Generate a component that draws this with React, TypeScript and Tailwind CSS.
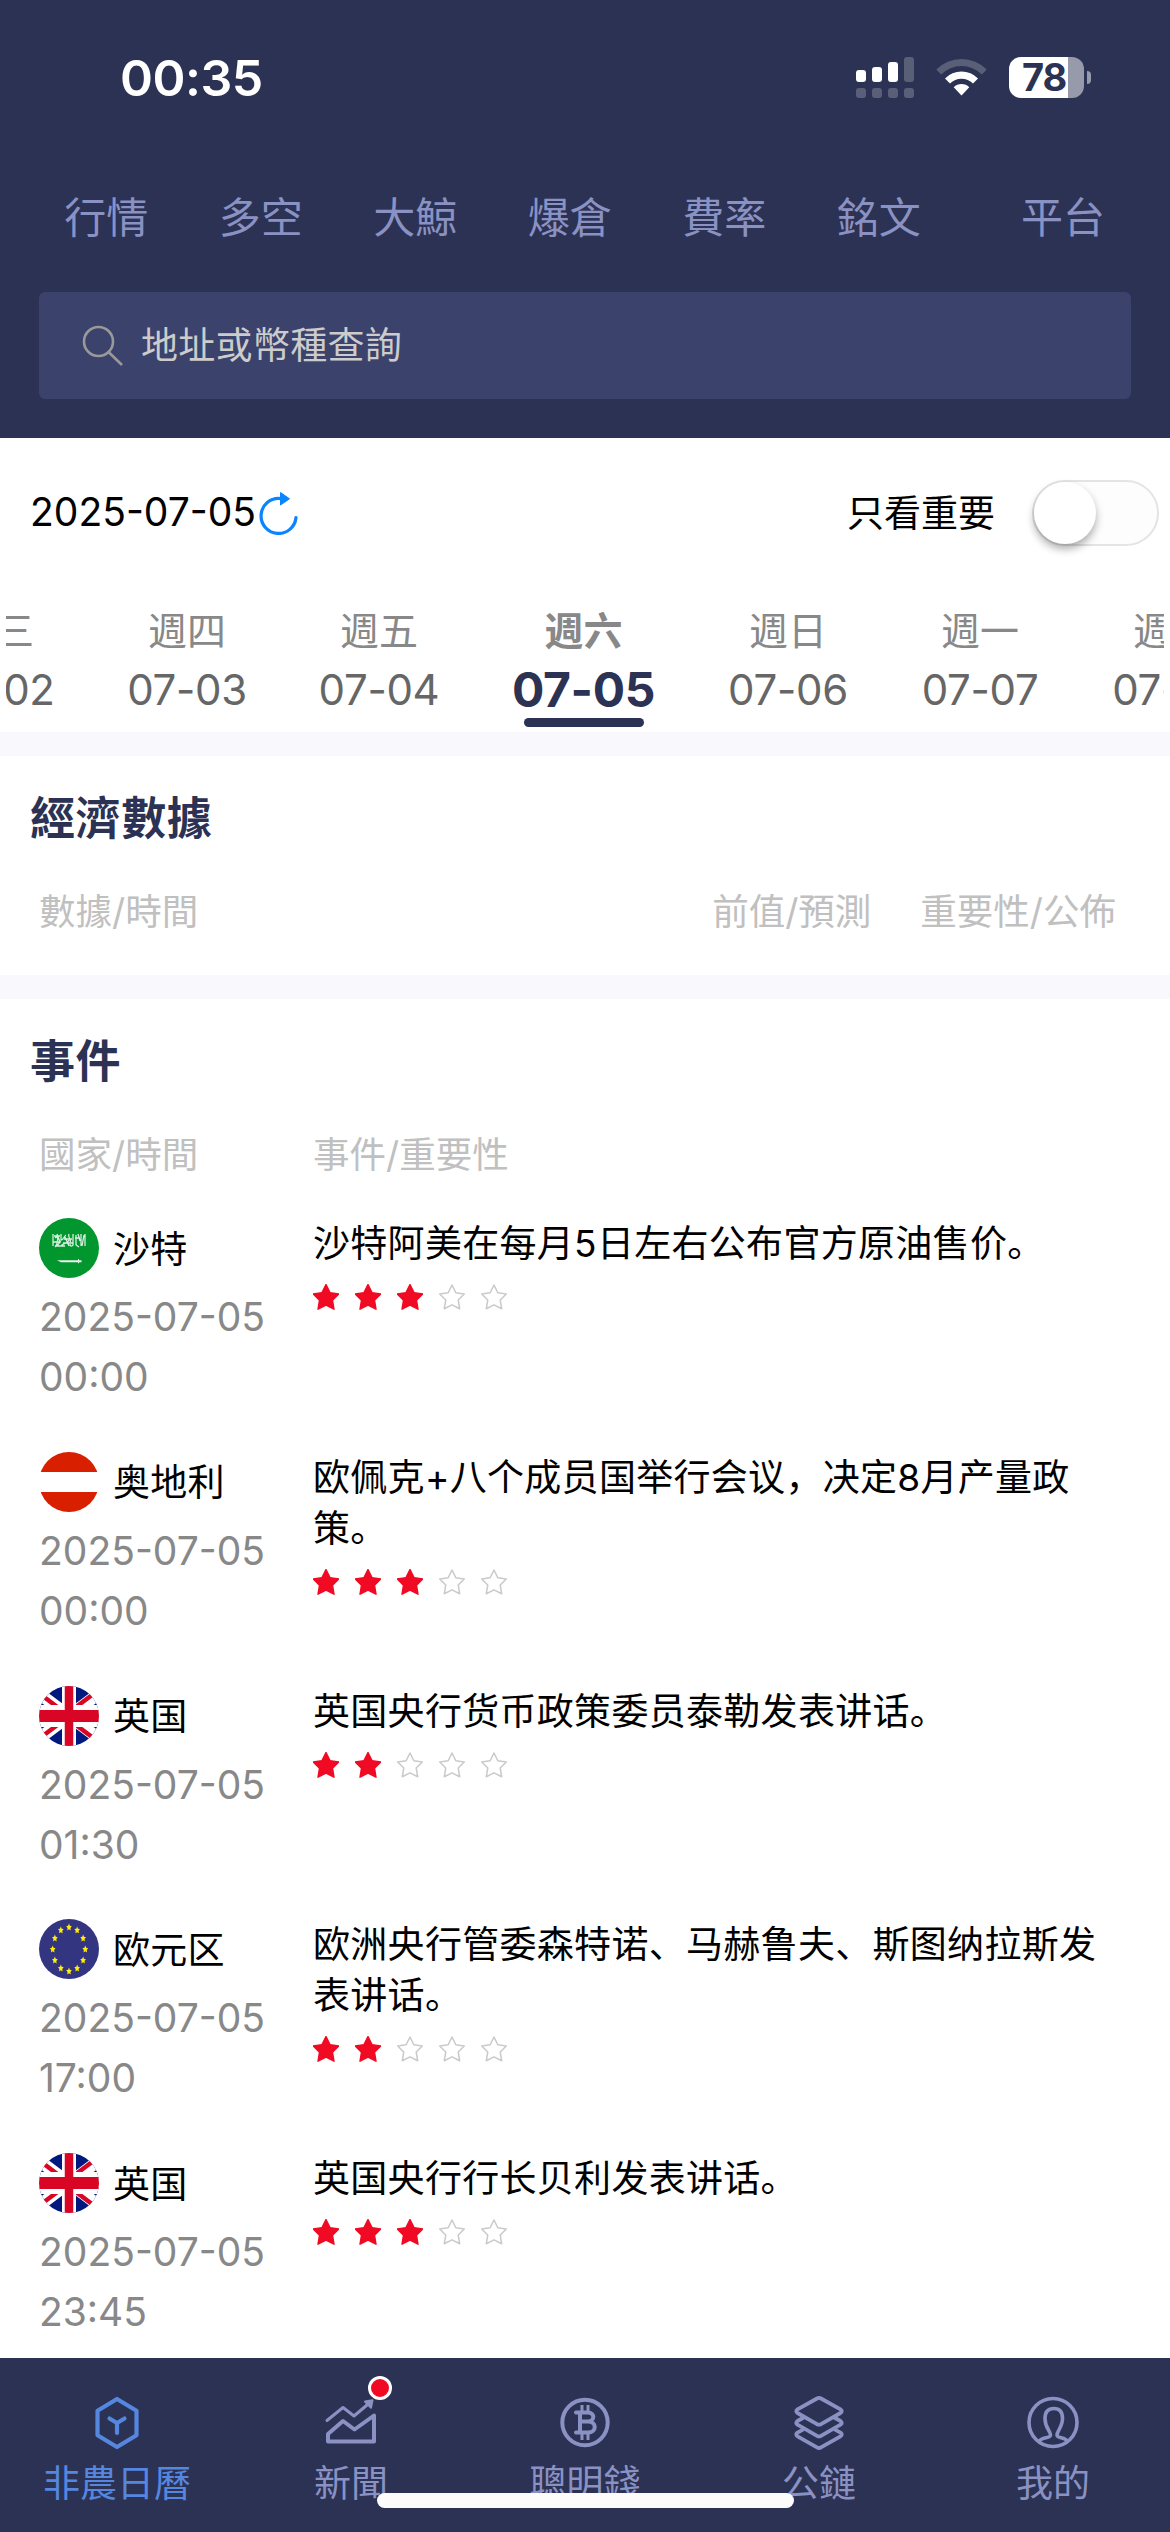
import React, { useState } from 'react';
import clsx from 'clsx';

interface EconomicEvent {
  country: string;
  flag: 'sa' | 'at' | 'gb' | 'eu';
  date: string;
  time: string;
  title: string;
  stars: number;
}

const channels = ['行情', '多空', '大鯨', '爆倉', '費率', '銘文'];

const days = [
  { week: '週三', date: '07-02' },
  { week: '週四', date: '07-03' },
  { week: '週五', date: '07-04' },
  { week: '週六', date: '07-05' },
  { week: '週日', date: '07-06' },
  { week: '週一', date: '07-07' },
  { week: '週二', date: '07-08' },
];

const events: EconomicEvent[] = [
  { country: '沙特', flag: 'sa', date: '2025-07-05', time: '00:00', title: '沙特阿美在每月5日左右公布官方原油售价。', stars: 3 },
  { country: '奥地利', flag: 'at', date: '2025-07-05', time: '00:00', title: '欧佩克+八个成员国举行会议，决定8月产量政策。', stars: 3 },
  { country: '英国', flag: 'gb', date: '2025-07-05', time: '01:30', title: '英国央行货币政策委员泰勒发表讲话。', stars: 2 },
  { country: '欧元区', flag: 'eu', date: '2025-07-05', time: '17:00', title: '欧洲央行管委森特诺、马赫鲁夫、斯图纳拉斯发表讲话。', stars: 2 },
  { country: '英国', flag: 'gb', date: '2025-07-05', time: '23:45', title: '英国央行行长贝利发表讲话。', stars: 3 },
];

const starPoints = '13,0.5 17,8.6 25.8,9.9 19.5,16.2 21,25.2 13,21.2 5,25.2 6.5,16.2 0.2,9.9 9,8.6';

const StatusBar = () => (
  <div className="flex h-[155px] items-center justify-between pl-[120px] pr-[79px]">
    <span className="text-[50px] font-semibold leading-none tracking-[-0.5px] text-white">00:35</span>
    <div className="flex items-center">
      <svg width="58" height="41" viewBox="0 0 58 41" fill="#fff">
        <rect x="0" y="13" width="10" height="12" rx="3" />
        <rect x="16" y="10" width="10" height="15" rx="3" />
        <rect x="32" y="5" width="10" height="20" rx="3" />
        <rect x="48" y="0" width="10" height="25" rx="3" opacity="0.22" />
        <g opacity="0.22">
          <rect x="0" y="31" width="10" height="10" rx="3" />
          <rect x="16" y="31" width="10" height="10" rx="3" />
          <rect x="32" y="31" width="10" height="10" rx="3" />
          <rect x="48" y="31" width="10" height="10" rx="3" />
        </g>
      </svg>
      <svg className="ml-[22px]" width="51" height="37" viewBox="0 0 51 37" fill="#fff">
        <path d="M0.3 10.5 A35.6 35.6 0 0 1 50.7 10.5 L45.8 15.5 A28.6 28.6 0 0 0 5.2 15.5 Z" opacity="0.22" />
        <path d="M9 19.4 A23.3 23.3 0 0 1 42 19.4 L37 24.4 A16.3 16.3 0 0 0 14 24.4 Z" />
        <path d="M17.7 28.3 A11 11 0 0 1 33.3 28.3 L25.5 36.6 Z" />
      </svg>
      <div className="ml-[22px] flex h-[41px] w-[75px] items-center rounded-[12px] bg-[linear-gradient(to_right,#fff_59px,#979aab_59px)] pl-[13px]">
        <span className="text-[38px] font-bold leading-[41px] tracking-[-1px] text-[#2c3253]">78</span>
      </div>
      <div className="ml-[3px] h-[13px] w-[4px] rounded-r-full bg-[#979aab]" />
    </div>
  </div>
);

const Star: React.FC<{ filled: boolean }> = ({ filled }) => (
  <svg width="26" height="26" viewBox="0 0 26 26">
    {filled ? (
      <polygon points={starPoints} fill="#f00a23" stroke="#f00a23" strokeWidth="1.4" strokeLinejoin="round" />
    ) : (
      <polygon points={starPoints} fill="none" stroke="#cacacd" strokeWidth="1.6" strokeLinejoin="round" transform="translate(0.5 0.5) scale(0.96)" />
    )}
  </svg>
);

const Flag: React.FC<{ code: EconomicEvent['flag'] }> = ({ code }) => (
  <svg className="shrink-0 rounded-full" width="60" height="60" viewBox="0 0 60 60">
    {code === 'sa' && (
      <>
        <rect width="60" height="60" fill="#02962e" />
        <g fill="none" stroke="#fff" strokeWidth="1.3" opacity="0.85">
          <path d="M14 16v12M16 20c4-4 3 6 0 9M18 16l3 8-3 4M22 16v6c3 0 3-4 5-5M22 28c3-4 6-1 8-6M26 19l4 9M30 16c-2 4 3 5 1 8M34 16v11c-2 2-3 1-3-1M37 17v10l3 2M39 16l2 7M42 16v12M45 17l-2 11M46 16v12M14 24h8M24 25h10M15 18h6M25 21h8M36 20h5M16 28h10" />
        </g>
        <path d="M18 42.2h21v-1.2h1v1.2h2.5v2h-2.5v1h-1v-1H22z" fill="#fff" opacity="0.9" />
      </>
    )}
    {code === 'at' && (
      <>
        <rect width="60" height="60" fill="#fff" />
        <rect width="60" height="20" fill="#d82000" />
        <rect y="40" width="60" height="20" fill="#d82000" />
      </>
    )}
    {code === 'gb' && (
      <>
        <rect width="60" height="60" fill="#00197f" />
        <path d="M-10 0L70 60M70 0L-10 60" stroke="#fff" strokeWidth="12" />
        <path d="M32 26.5L72 -3.5M28 33.5L-12 63.5" stroke="#d80624" strokeWidth="4.5" transform="translate(-1 -1)" />
        <path d="M28 26.5L-12 -3.5M32 33.5L72 63.5" stroke="#d80624" strokeWidth="4.5" transform="translate(-1 1)" />
        <path d="M30 0V60M0 30H60" stroke="#fff" strokeWidth="14" />
        <path d="M0 30H60" stroke="#fff" strokeWidth="22" />
        <path d="M30 0V60" stroke="#d80624" strokeWidth="8.5" />
        <path d="M0 30H60" stroke="#d80624" strokeWidth="12" />
      </>
    )}
    {code === 'eu' && (
      <>
        <rect width="60" height="60" fill="#333581" />
        {[0, 30, 60, 90, 120, 150, 180, 210, 240, 270, 300, 330].map((deg) => (
          <polygon
            key={deg}
            points={starPoints}
            fill="#ffee0a"
            transform={`translate(${30 + 16.3 * Math.sin((deg * Math.PI) / 180)} ${30 - 22 * Math.cos((deg * Math.PI) / 180)}) scale(0.22 0.28) translate(-13 -13)`}
          />
        ))}
      </>
    )}
  </svg>
);

const EventRow: React.FC<{ event: EconomicEvent }> = ({ event }) => (
  <li className="flex h-[233.75px] pl-[39px] pr-[68px] text-[37px]">
    <div className="w-[274px] shrink-0">
      <div className="flex h-[60px] items-center">
        <Flag code={event.flag} />
        <span className="ml-[14px] mt-[2px] leading-none tracking-[0.3px] text-black">{event.country}</span>
      </div>
      <div className="mt-[9px] text-[39px] leading-[60px] text-[#888]">
        <div>{event.date}</div>
        <div>{event.time}</div>
      </div>
    </div>
    <div className="min-w-0 flex-1">
      <p className="leading-[51px] tracking-[0.3px] text-black">{event.title}</p>
      <div className="mt-[15px] flex gap-4">
        {[1, 2, 3, 4, 5].map((n) => (
          <Star key={n} filled={n <= event.stars} />
        ))}
      </div>
    </div>
  </li>
);

const tabs = [
  {
    label: '非農日曆',
    icon: (
      <>
        <path d="M28 5L47.5 16.8V41.2L28 53L8.5 41.2V16.8Z" strokeWidth="4.2" />
        <path d="M20.5 24.5L28 29L35.5 24.5M28 29V39" strokeWidth="4.2" />
      </>
    ),
  },
  {
    label: '新聞',
    badge: true,
    icon: (
      <>
        <path d="M4 26.5L20 13.5L31 22L47 8.5" strokeWidth="3" />
        <path d="M42 7.5L49.5 6.2L48 13.8Z" fill="currentColor" strokeWidth="2" />
        <path d="M5 40L20 27L31.5 35.5L51 21.5V47.5H5Z" strokeWidth="4" />
      </>
    ),
  },
  {
    label: '聰明錢',
    icon: (
      <>
        <circle cx="28" cy="28.5" r="22.7" strokeWidth="4" />
        <path d="M19 18.5H31C38 18.5 38 27.5 31 27.5H24M31 27.5C40 27.5 40 38.5 31 38.5H19M23 18.5V38.5" strokeWidth="4" />
        <path d="M25 11V18M31 11V18M25 39V46M31 39V46" strokeWidth="3" strokeLinecap="butt" />
      </>
    ),
  },
  {
    label: '公鏈',
    icon: (
      <g strokeWidth="3.8">
        <path d="M26 4.5Q28 3.4 30 4.5L49.5 15.3Q52 17.3 49.5 19L30 30.2Q28 31.2 26 30.2L6.5 19Q4 17.3 6.5 15.3Z" />
        <path d="M12 24L6.5 27Q4 29 6.5 30.7L26 41.8Q28 43 30 41.8L49.5 30.7Q52 29 49.5 27L44 24" />
        <path d="M12 35.6L6.5 38.6Q4 40.5 6.5 42.3L26 53.4Q28 54.6 30 53.4L49.5 42.3Q52 40.5 49.5 38.6L44 35.6" />
      </g>
    ),
  },
  {
    label: '我的',
    icon: (
      <g strokeWidth="3.6">
        <circle cx="28" cy="28.5" r="24" />
        <path d="M14.5 47C17 43 25.5 44.5 25.5 41C25.5 37 20 34 20 24.5C20 17.5 23 14.5 29 14.5C35 14.5 37.5 18 37.5 24.5C37.5 33 32 37 32 41C32 44.5 40 43 42 47" />
      </g>
    ),
  },
];

export default function App() {
  const [onlyImportant, setOnlyImportant] = useState(false);
  const [selectedDate, setSelectedDate] = useState('07-05');
  const [activeTab, setActiveTab] = useState('非農日曆');

  const visibleEvents = onlyImportant ? events.filter((event) => event.stars >= 3) : events;

  return (
    <div className="flex h-[2532px] w-[1170px] flex-col overflow-hidden bg-white font-[Inter,'Noto_Sans_CJK_SC',sans-serif]">
      <header className="h-[438px] shrink-0 bg-[#2c3253]">
        <StatusBar />
        <nav className="flex h-[125px] items-center text-[42px] text-[#8a91c3]">
          <div className="flex flex-1 pl-[29px]">
            {channels.map((name) => (
              <span key={name} className="w-[154.5px] text-center leading-none">{name}</span>
            ))}
          </div>
          <span className="w-[214px] text-center leading-none">平台</span>
        </nav>
        <div className="mx-[39px] mt-[12px] flex h-[107px] items-center rounded-[6px] bg-[#3b426b] pl-[43px]">
          <svg width="42" height="42" viewBox="0 0 42 42" fill="none" stroke="#999" strokeWidth="2.6">
            <circle cx="16.5" cy="16.5" r="14.5" />
            <path d="M26.5 27L40 40" />
          </svg>
          <span className="ml-[17px] text-[37px] leading-none tracking-[0.3px] text-[#ccc]">地址或幣種查詢</span>
        </div>
      </header>

      <section className="shrink-0">
        <div className="flex h-[150px] items-center pl-[30px] pr-[11px] text-black">
          <span className="mb-[3px] text-[39px] leading-none">2025-07-05</span>
          <svg className="mb-px ml-[3px]" width="40" height="44" viewBox="0 0 40 44" fill="none">
            <path d="M37 26.5A17.5 17.5 0 1 1 21 7.5" stroke="#0a84ff" strokeWidth="3.2" strokeLinecap="round" />
            <path d="M21.5 1.5L30.5 7.8L21.5 14Z" fill="#0a84ff" stroke="#0a84ff" strokeLinejoin="round" />
          </svg>
          <span className="ml-auto text-[37px] leading-none">只看重要</span>
          <button
            type="button"
            onClick={() => setOnlyImportant(!onlyImportant)}
            className={clsx(
              'ml-[37px] flex h-[66px] w-[127px] rounded-full border-2',
              onlyImportant ? 'justify-end border-[#5586e0] bg-[#5586e0]' : 'border-[#e4e4e4] bg-[#fdfdfd]'
            )}
          >
            <span className="size-[62px] rounded-full bg-white shadow-[0_5px_8px_rgba(0,0,0,0.32)]" />
          </button>
        </div>

        <div className="mx-[6px] h-[144px] overflow-hidden">
          <div className="ml-[-107px] flex w-[1400px]">
            {days.map((day) => {
              const active = day.date === selectedDate;
              return (
                <button
                  key={day.date}
                  type="button"
                  onClick={() => setSelectedDate(day.date)}
                  className={clsx('flex shrink-0 flex-col items-center pt-[15px]', active ? 'w-[217px] font-bold' : 'w-[192px]')}
                >
                  <span className="text-[39px] leading-[56px] text-[#888]">{day.week}</span>
                  <span className={clsx('leading-[62px]', active ? 'text-[48px] tracking-[-0.4px] text-[#2c3253]' : 'text-[42px] tracking-[-0.3px] text-[#666]')}>
                    {day.date}
                  </span>
                  {active && <span className="mt-[-3px] h-[9px] w-[120px] rounded-full bg-[#2c3253]" />}
                </button>
              );
            })}
          </div>
        </div>
      </section>

      <section className="h-[243px] shrink-0 border-t-[24px] border-[#f8f8fd] pl-[30px]">
        <h2 className="pt-[31px] text-[45px] font-bold leading-[64px] tracking-[0.6px] text-[#2c3253]">經濟數據</h2>
        <div className="mt-[40px] flex pl-[9px] pr-[54px] text-[36.5px] leading-[42px] text-[#c0c0c0]">
          <span>數據/時間</span>
          <span className="ml-auto">前值/預測</span>
          <span className="ml-[49px]">重要性/公佈</span>
        </div>
      </section>

      <section className="min-h-0 flex-1 overflow-hidden border-t-[24px] border-[#f8f8fd]">
        <h2 className="pl-[30px] pt-[31px] text-[45px] font-bold leading-[64px] tracking-[0.6px] text-[#2c3253]">事件</h2>
        <div className="mt-[40px] flex pl-[39px] text-[36.5px] leading-[42px] text-[#c0c0c0]">
          <span className="w-[274px]">國家/時間</span>
          <span>事件/重要性</span>
        </div>
        <ul className="mt-[42px]">
          {visibleEvents.map((event) => (
            <EventRow key={event.date + event.time + event.title} event={event} />
          ))}
        </ul>
      </section>

      <footer className="relative flex h-[174px] shrink-0 bg-[#2c3253]">
        {tabs.map((tab) => (
          <button
            key={tab.label}
            type="button"
            onClick={() => setActiveTab(tab.label)}
            className={clsx('flex flex-1 flex-col items-center pt-[36px]', activeTab === tab.label ? 'text-[#5586e0]' : 'text-[#8a91c3]')}
          >
            <span className="relative">
              <svg width="56" height="58" viewBox="0 0 56 58" fill="none" stroke="currentColor" strokeLinecap="round" strokeLinejoin="round">
                {tab.icon}
              </svg>
              {tab.badge && (
                <span className="absolute right-[-13px] top-[-18px] size-[24px] rounded-full border-[3px] border-white bg-[#f00a23]" />
              )}
            </span>
            <span className="mt-[12px] text-[37px] leading-[40px]">{tab.label}</span>
          </button>
        ))}
        <div className="absolute bottom-[24px] left-[377px] h-[15px] w-[417px] rounded-full bg-[#fcfcfc]" />
      </footer>
    </div>
  );
}
